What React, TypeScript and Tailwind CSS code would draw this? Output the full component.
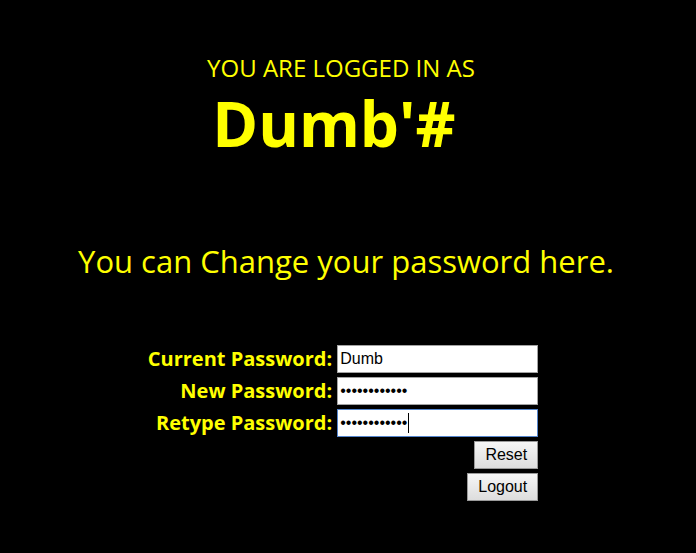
import React from 'react';

const inputCls =
    "h-[28px] w-[201px] bg-white border border-[#a3a3a3] px-[2px] text-[16px] text-black font-['Liberation_Sans',sans-serif] outline-none";
const buttonCls =
    "h-[28px] px-[10px] border border-[#9a9a9a] bg-gradient-to-b from-[#f6f6f6] to-[#dddddd] text-[16px] text-black font-['Liberation_Sans',sans-serif]";

const App: React.FC = () => {
    return (
        <div className="min-h-screen w-full bg-black text-[#ffff00] font-['Open_Sans',sans-serif]">
            <div className="flex flex-col items-center pr-[14px] pt-[52px]">
                <div className="text-[24px] leading-[32px]">YOU ARE LOGGED IN AS</div>
                <div className="text-[62px] font-bold leading-[72px] mt-[3px] pr-[14px]">Dumb'#</div>
            </div>
            <div className="mt-[82px] text-center text-[31px] leading-[40px] pr-[4px]">
                You can Change your password here.
            </div>
            <div className="mt-[64px] flex justify-center pr-[10px]">
                <div className="grid grid-cols-[auto_201px] gap-x-[5px] gap-y-[4px] items-center">
                    <label className="text-right text-[20px] font-bold leading-[28px]">Current Password:</label>
                    <input type="text" defaultValue="Dumb" className={inputCls} />
                    <label className="text-right text-[20px] font-bold leading-[28px]">New Password:</label>
                    <input type="password" defaultValue="Dumbbbbbbbbb" className={inputCls} />
                    <label className="text-right text-[20px] font-bold leading-[28px]">Retype Password:</label>
                    <div className="relative">
                        <input
                            type="password"
                            defaultValue="Dumbbbbbbbbb"
                            className="h-[28px] w-[201px] bg-white border-[1.5px] border-[#5585cc] px-[2px] text-[16px] text-black font-['Liberation_Sans',sans-serif] outline-none"
                        />
                        {/* text caret */}
                        <span className="absolute left-[71px] top-[4px] h-[20px] w-px bg-black"></span>
                    </div>
                    <div></div>
                    <div className="flex justify-end">
                        <button className={buttonCls}>Reset</button>
                    </div>
                    <div></div>
                    <div className="flex justify-end">
                        <button className={buttonCls}>Logout</button>
                    </div>
                </div>
            </div>
        </div>
    );
};

export default App;
